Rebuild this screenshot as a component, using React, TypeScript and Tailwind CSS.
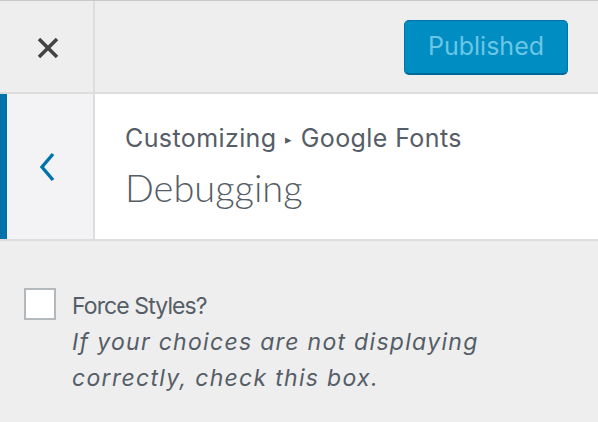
import React from "react";

export default function App() {
  const font = { fontFamily: "Inter, 'Noto Sans', sans-serif" };
  return (
    <div className="w-[598px] h-[422px] bg-[#eeeeee] flex flex-col overflow-hidden" style={font}>
      <div className="h-[94px] flex border-t border-[#c8c8c8] border-b-2 border-b-[#dddddd] shrink-0">
        <div className="w-[95px] border-r-2 border-[#dddddd] flex items-center justify-center pl-[2px] pt-[2px]">
          <svg width="22" height="22" viewBox="0 0 22 22">
            <path d="M2 2 L20 20 M20 2 L2 20" stroke="#444" strokeWidth="3.6" strokeLinecap="butt" />
          </svg>
        </div>
        <div className="flex-1 flex items-start justify-end pr-[30px] pt-[19px]">
          <div className="w-[164px] h-[55px] rounded-[5px] bg-[#008ec2] border border-[#0073aa] border-b-2 border-b-[#006799] flex items-center justify-center text-[25px] text-[#6bc6e6]">
            Published
          </div>
        </div>
      </div>
      <div className="h-[147px] flex bg-white border-b-2 border-[#dddddd] shrink-0">
        <div className="w-[95px] flex border-r-2 border-[#dddddd] bg-[#f3f3f5]">
          <div className="w-[7px] bg-[#0073aa]" />
          <div className="flex-1 flex items-center justify-center pr-[6px]">
            <svg width="16" height="30" viewBox="0 0 16 30">
              <path d="M14 2 L3 15 L14 28" stroke="#0073aa" strokeWidth="3.4" fill="none" />
            </svg>
          </div>
        </div>
        <div className="flex-1 pl-[30px] pt-[28px] text-[#555d66]">
          <div className="text-[25px] leading-[32px] whitespace-nowrap tracking-[0.4px]">
            Customizing <span className="text-[13px] align-[3px] mx-[1px]">▸</span> Google Fonts
          </div>
          <div
            className="text-[38px] font-light leading-[44px] mt-[10px]"
            style={{ fontFamily: "Lato, Roboto, sans-serif" }}
          >
            Debugging
          </div>
        </div>
      </div>
      <div className="flex pl-[24px] pt-[47px] gap-[16px]">
        <div className="w-[32px] h-[32px] bg-white border-2 border-[#b4b9be] shrink-0" />
        <div className="text-[#555d66]">
          <div className="text-[23px] leading-[36px] tracking-[-0.9px]">Force Styles?</div>
          <div className="text-[23px] italic leading-[36px] tracking-[1.3px] w-[460px]">
            If your choices are not displaying correctly, check this box.
          </div>
        </div>
      </div>
    </div>
  );
}
